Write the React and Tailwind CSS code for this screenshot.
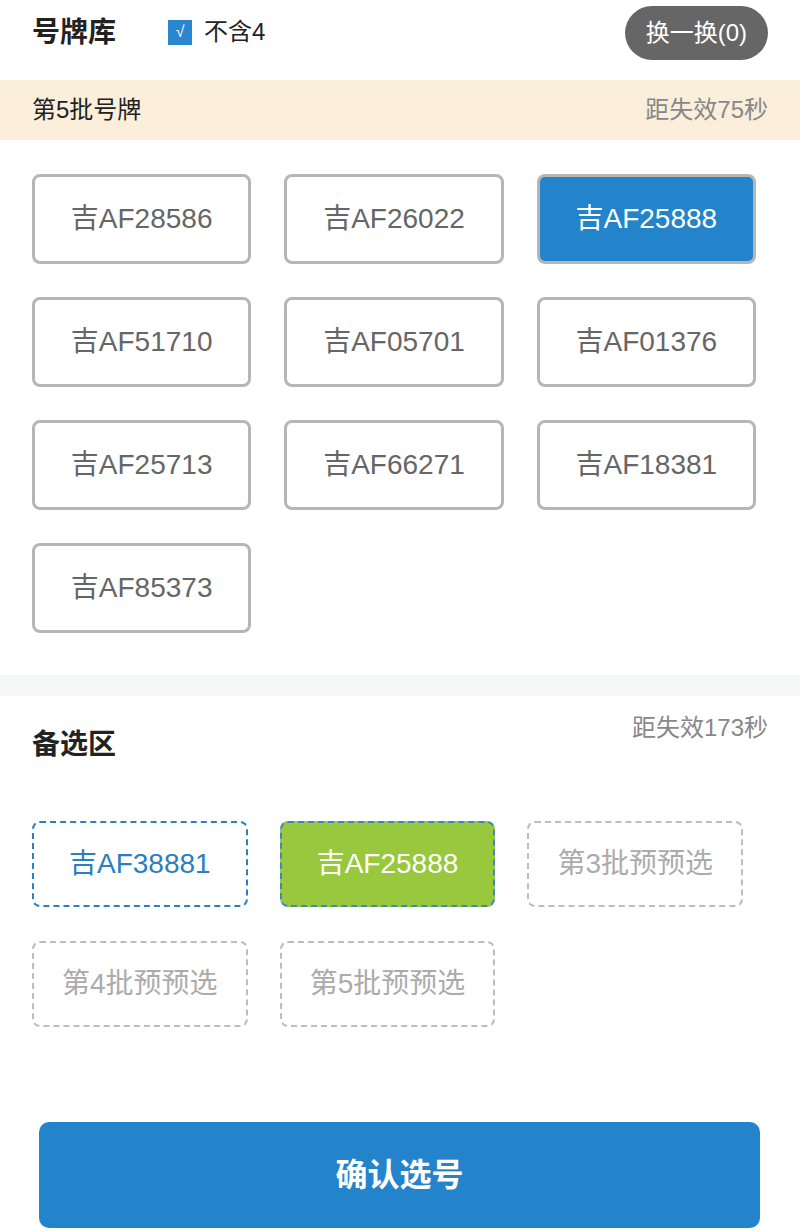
import React, { useState } from 'react';

const font = { fontFamily: '"Liberation Sans", "Noto Sans CJK SC", sans-serif' };

const plates = [
  '吉AF28586', '吉AF26022', '吉AF25888',
  '吉AF51710', '吉AF05701', '吉AF01376',
  '吉AF25713', '吉AF66271', '吉AF18381',
  '吉AF85373',
];

const slots = [
  { label: '吉AF38881', kind: 'blue' },
  { label: '吉AF25888', kind: 'green' },
  { label: '第3批预预选', kind: 'empty' },
  { label: '第4批预预选', kind: 'empty' },
  { label: '第5批预预选', kind: 'empty' },
];

const slotClass = {
  blue: 'border-[#2f7fbf] text-[#2a7fc0] bg-white',
  green: 'border-[#3d86c0] text-white bg-[#97c83d]',
  empty: 'border-[#bdbdbd] text-[#ababab] bg-white',
};

const App = () => {
  const [selected, setSelected] = useState('吉AF25888');

  return (
    <div className="w-[800px] min-h-[1231px] bg-white text-[#222]" style={font}>
      <div className="h-[80px] flex items-center pl-[32px] pr-[32px]">
        <div className="text-[28px] font-bold pb-[14px]">号牌库</div>
        <div className="flex items-center ml-[52px] pb-[16px]">
          <div className="w-[24px] h-[25px] bg-[#2a86d1] flex items-center justify-center">
            <span className="text-white text-[16px] leading-none">√</span>
          </div>
          <span className="ml-[12px] text-[24px] text-[#222]">不含4</span>
        </div>
        <button className="ml-auto mb-[14px] h-[54px] px-[21px] rounded-full bg-[#666] text-white text-[24px]">
          换一换(0)
        </button>
      </div>

      <div className="h-[60px] bg-[#fbefdc] flex items-center justify-between px-[32px]">
        <span className="text-[24px] text-[#222]">第5批号牌</span>
        <span className="text-[24px] text-[#888]">距失效75秒</span>
      </div>

      <div className="grid grid-cols-3 gap-x-[33px] gap-y-[33px] pl-[32px] pr-[44px] pt-[34px] pb-[42px]">
        {plates.map((p) => {
          const on = p === selected;
          return (
            <button
              key={p}
              onClick={() => setSelected(p)}
              className={`h-[90px] rounded-[8px] border-[3px] border-[#b6b6b6] text-[28px] ${
                on ? 'bg-[#2384cc] text-white' : 'bg-white text-[#666]'
              }`}
            >
              {p}
            </button>
          );
        })}
      </div>

      <div className="h-[21px] bg-[#f5f6f6]" />

      <div className="px-[32px] pt-[18px] relative">
        <div className="absolute right-[32px] top-[14px] text-[24px] text-[#888]">距失效173秒</div>
        <div className="pt-[10px] text-[28px] font-bold">备选区</div>
      </div>

      <div className="grid grid-cols-3 gap-x-[32px] gap-y-[34px] pl-[32px] pr-[57px] pt-[55px]">
        {slots.map((s) => (
          <div
            key={s.label}
            className={`h-[86px] rounded-[8px] border-2 border-dashed flex items-center justify-center text-[28px] ${slotClass[s.kind]}`}
          >
            {s.label}
          </div>
        ))}
      </div>

      <div className="px-[39px] pt-[95px]">
        <button className="w-[721px] h-[106px] rounded-[10px] bg-[#2384cc] text-white text-[32px] font-bold">
          确认选号
        </button>
      </div>
    </div>
  );
};

export default App;
